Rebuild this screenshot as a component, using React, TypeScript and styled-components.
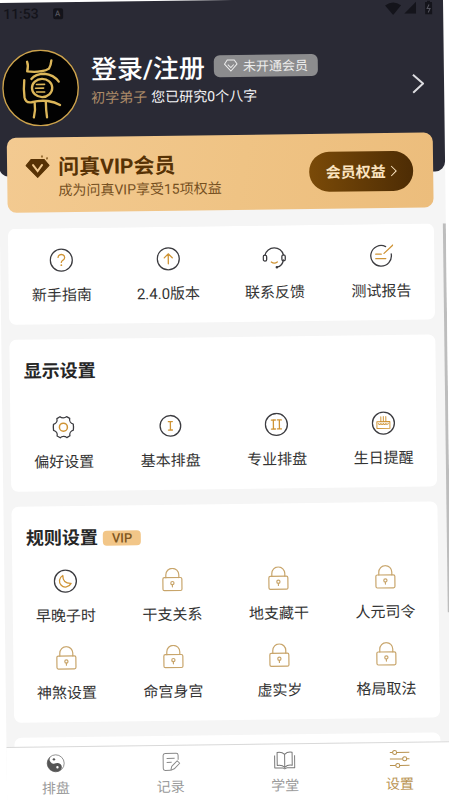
import React from "react";
import styled, { createGlobalStyle } from "styled-components";

const GlobalStyle = createGlobalStyle`
  * { box-sizing: border-box; }
  html, body { margin: 0; background: #fff; overflow: hidden; }
  body, button { font-family: Roboto, "Noto Sans CJK SC", sans-serif; }
  button { border: 0; padding: 0; background: none; color: inherit; cursor: pointer; }
  a { text-decoration: none; color: inherit; }
  svg { display: block; flex: none; }
`;

const Shell = styled.div`
  display: flex;
  flex-direction: column;
  width: calc(100% - 3px);
  height: calc(100vh + 8px);
  background: #f5f5f5;
  transform-origin: 0 0;
  transform: translate(-3px, 3px) rotate(-0.73deg);
`;

const Header = styled.header`
  height: 174px;
  flex: none;
  background: #2a2a35;
  border-radius: 0 0 10px 10px;
`;

const StatusBar = styled.div`
  display: flex;
  align-items: center;
  height: 22px;
  padding: 0 8px 0 6px;
  color: #14141b;
  font-size: 14px;
  font-weight: 500;
`;

const StatusIcons = styled.div`
  display: flex;
  align-items: center;
  gap: 3px;
  margin-left: auto;
  margin-bottom: 2px;
`;

const InputBadge = styled.span`
  display: grid;
  place-items: center;
  width: 10px;
  height: 11px;
  margin-left: 14px;
  border-radius: 2px;
  background: #14141b;
  color: #55555f;
  font-size: 8px;
`;

const Profile = styled.div`
  display: flex;
  align-items: center;
  margin-top: 25px;
  padding: 0 20px 0 4px;
`;

const ProfileText = styled.div`
  display: flex;
  flex: 1;
  flex-direction: column;
  margin: -14px 0 0 12px;
`;

const NameRow = styled.div`
  display: flex;
  align-items: center;
  gap: 9px;
`;

const LoginLink = styled.a`
  color: #fff;
  font-size: 26px;
  font-weight: 500;
  line-height: 34px;
`;

const MemberTag = styled.span`
  display: flex;
  align-items: center;
  gap: 5px;
  height: 22px;
  margin-bottom: 4px;
  padding: 0 10px;
  border-radius: 6px;
  background: #8c8c8e;
  color: #ececec;
  font-size: 13px;
`;

const Study = styled.p`
  margin: 0;
  color: #f2f2f4;
  font-size: 14px;
  line-height: 22px;
`;

const Rank = styled.span`
  margin-right: 4px;
  color: #ac8a68;
`;

const Banner = styled.section`
  display: flex;
  align-items: center;
  flex: none;
  height: 75px;
  margin: -39px 12px 0 8px;
  padding: 0 20px 0 18px;
  border-radius: 9px;
  background: linear-gradient(100deg, #f3ca91, #efc384 55%, #ecbd7c);
  color: #573205;
`;

const BannerText = styled.div`
  display: flex;
  flex: 1;
  flex-direction: column;
  margin: 6px 0 0 8px;
`;

const BannerTitle = styled.h2`
  margin: 0;
  font-size: 21px;
  font-weight: 700;
  line-height: 25px;
`;

const BannerNote = styled.p`
  margin: 0;
  color: #76501f;
  font-size: 14px;
  line-height: 20px;
`;

const BenefitButton = styled.button`
  display: flex;
  align-items: center;
  justify-content: center;
  gap: 4px;
  width: 104px;
  height: 40px;
  border-radius: 20px;
  background: linear-gradient(90deg, #7a4a08, #4d2c04);
  color: #fbe4c0;
  font-size: 15px;
  font-weight: 700;
`;

const BannerIcon = styled.span`
  margin-bottom: 18px;
`;

const Main = styled.main`
  display: flex;
  flex: 1;
  min-height: 0;
  overflow: hidden;
  margin-top: 16px;
  padding-left: 8px;
`;

const Cards = styled.div`
  display: flex;
  flex: 1;
  flex-direction: column;
  gap: 15px;
`;

const ScrollThumb = styled.div`
  width: 3px;
  height: 75%;
  margin-left: 9px;
  background: #bdbdbd;
`;

const Card = styled.section`
  flex: none;
  padding: 20px 0 18px;
  border-radius: 7px;
  background: #fff;
`;

const CardHead = styled.div<{ $gap: number }>`
  display: flex;
  align-items: center;
  gap: 5px;
  margin-bottom: ${(p) => p.$gap}px;
  padding-left: 14px;
`;

const CardTitle = styled.h2`
  margin: 0;
  color: #262626;
  font-size: 18px;
  font-weight: 700;
  line-height: 24px;
`;

const VipTag = styled.span`
  padding: 0 9px;
  border-radius: 4px;
  background: #f2c688;
  color: #80571f;
  font-size: 13px;
  font-weight: 500;
  line-height: 15px;
`;

const Grid = styled.div`
  display: grid;
  grid-template-columns: repeat(4, 1fr);
  row-gap: 19px;
`;

const Item = styled.button`
  display: flex;
  flex-direction: column;
  align-items: center;
  gap: 12px;
  color: #333;
  font-size: 15px;
  line-height: 22px;
`;

const TabBar = styled.nav`
  display: flex;
  flex: none;
  justify-content: space-between;
  height: 64px;
  padding: 6px 4px 0 0;
  border-top: 1px solid #d9d9d9;
  background: #fff;
`;

const Tab = styled.a<{ $active?: boolean }>`
  display: flex;
  flex-direction: column;
  align-items: center;
  gap: 5px;
  width: 98px;
  color: ${(p) => (p.$active ? "#b8924f" : "#9a9a9a")};
  font-size: 14px;
  line-height: 20px;
`;

const INK = "#3c3c40";
const GOLD = "#cf9435";

type IconProps = { children: React.ReactNode };
const Icon = ({ children }: IconProps) => (
  <svg width="24" height="24" viewBox="0 0 24 24" fill="none" strokeWidth="1.3" strokeLinecap="round" strokeLinejoin="round" aria-hidden="true">
    {children}
  </svg>
);
const Ring = () => <circle cx="12" cy="12" r="11" stroke={INK} />;

const icons: Record<string, React.ReactNode> = {
  guide: (
    <Icon>
      <Ring />
      <path d="M8.8 9.2a3.3 3 0 1 1 5 2.7c-1.2.8-1.8 1.3-1.8 2.3" stroke={GOLD} />
      <circle cx="12" cy="17" r=".9" fill={GOLD} />
    </Icon>
  ),
  version: (
    <Icon>
      <Ring />
      <path d="M12 17V7.2M8 11l4-4 4 4" stroke={GOLD} />
    </Icon>
  ),
  contact: (
    <Icon>
      <path d="M2.8 9.5a9.4 9 0 0 1 18.4 0M21 14.5c-.5 4.4-3 6.6-6.5 7.2" stroke={INK} />
      <rect x="1" y="9.5" width="3.4" height="6" rx="1.7" stroke={INK} />
      <rect x="19.6" y="9.5" width="3.4" height="6" rx="1.7" stroke={INK} />
      <circle cx="14.5" cy="21.8" r="1.3" fill={INK} />
      <path d="M9 16.5q3 2.4 6 0" stroke={GOLD} />
    </Icon>
  ),
  report: (
    <Icon>
      <path d="M16.5 2.500A10.300 10.300 0 1 0 22 10" stroke={INK} />
      <path d="M6.500 10h5.500M6.500 14.500h10M14.800 9.300l9-8.300" stroke={GOLD} />
    </Icon>
  ),
  gear: (
    <Icon>
      <path d="M8.7 1.500c1.700 1.700 4.900 1.700 6.600 0l3.100 1.800c-.6 2.500.9 5 3.500 5.700.3 2 .3 4 0 6-2.600.7-4.100 3.200-3.500 5.700l-3.100 1.800c-1.700-1.700-4.900-1.700-6.600 0l-3.100-1.800c.6-2.500-.9-5-3.500-5.700-.3-2-.3-4 0-6 2.600-.7 4.100-3.200 3.500-5.700z" stroke={INK} />
      <circle cx="12" cy="12" r="4" stroke={GOLD} strokeWidth="1.5" />
    </Icon>
  ),
  basic: (
    <Icon>
      <circle cx="12" cy="12" r="10.3" stroke={INK} />
      <path d="M10 7.800h4M12 7.800v8.400M10 16.200h4" stroke={GOLD} />
    </Icon>
  ),
  pro: (
    <Icon>
      <Ring />
      <path d="M7 7.500h4M9 7.500v9M7 16.500h4M13 7.500h4M15 7.500v9M13 16.500h4" stroke={GOLD} />
    </Icon>
  ),
  cake: (
    <Icon>
      <Ring />
      <path d="M5.500 10.500h13v6.800h-13zM7 12.500q1.200 1.600 2.500 0 1.200 1.600 2.500 0 1.200 1.600 2.500 0 1.200 1.600 2.500 0M9.500 5.500v4.500M12 5.500v4.500M14.500 5.500v4.500" stroke={GOLD} strokeWidth="1" />
    </Icon>
  ),
  moon: (
    <Icon>
      <Ring />
      <path d="M9.500 6.300C9.300 11.500 12 14.500 17.700 14.300C15.500 18.300 10.500 19 7.800 16C5 13 5.600 8.600 9.500 6.300z" stroke={GOLD} />
    </Icon>
  ),
  lock: (
    <Icon>
      <g stroke="#c8a56b" strokeWidth="1.2">
        <path d="M5.500 9.800V7a6.500 6.500 0 0 1 13 0v2.800" />
        <rect x="2.5" y="9.8" width="19" height="13" rx="1.5" />
        <circle cx="12" cy="15.3" r="1.6" />
        <path d="M12 17v2" />
      </g>
    </Icon>
  ),
};

type Entry = { icon: string; label: string };
const shortcuts: Entry[] = [
  { icon: "guide", label: "新手指南" },
  { icon: "version", label: "2.4.0版本" },
  { icon: "contact", label: "联系反馈" },
  { icon: "report", label: "测试报告" },
];
const display: Entry[] = [
  { icon: "gear", label: "偏好设置" },
  { icon: "basic", label: "基本排盘" },
  { icon: "pro", label: "专业排盘" },
  { icon: "cake", label: "生日提醒" },
];
const rules: Entry[] = [
  { icon: "moon", label: "早晚子时" },
  { icon: "lock", label: "干支关系" },
  { icon: "lock", label: "地支藏干" },
  { icon: "lock", label: "人元司令" },
  { icon: "lock", label: "神煞设置" },
  { icon: "lock", label: "命宫身宫" },
  { icon: "lock", label: "虚实岁" },
  { icon: "lock", label: "格局取法" },
];

const ItemGrid = ({ items }: { items: Entry[] }) => (
  <Grid>
    {items.map((it) => (
      <Item key={it.label} type="button">
        {icons[it.icon]}
        <span>{it.label}</span>
      </Item>
    ))}
  </Grid>
);

const Avatar = () => (
  <svg width="77" height="77" viewBox="0 0 76 76" fill="none" aria-hidden="true">
    <circle cx="38" cy="38" r="37.2" fill="#020202" stroke="#cda34c" strokeWidth="1.4" />
    <g stroke="#dcb659" strokeWidth="2.3" strokeLinecap="round" strokeLinejoin="round">
      <path d="M25 12q1.500 4 0 9.500 8 1 14 0 5-.5 7.500-2.500 2-3 2.500-8" />
      <path d="M29 29q4-5 13-5 9 1 14 8" />
      <path d="M22 30q-1 9 0 17 1 6 7 5 8-2 16-1 7 1 12 4" />
      <ellipse cx="39.5" cy="38" rx="10" ry="9" />
      <path d="M34 34.500h8M33 38.200h8M34 42h8" strokeWidth="1.6" />
      <path d="M32 53q1 7-1 14M43 52q0 8 1 15" />
    </g>
  </svg>
);

const Chevron = ({ w, h, stroke }: { w: number; h: number; stroke: number }) => (
  <svg width={w} height={h} viewBox={`0 0 ${w} ${h}`} fill="none" stroke="currentColor" strokeWidth={stroke} aria-hidden="true">
    <path d={`M1 1L${w - 1} ${h / 2}L1 ${h - 1}`} />
  </svg>
);

const MoreButton = styled.button`
  color: #dcdce0;
`;

export default function App() {
  return (
    <>
      <GlobalStyle />
      <Shell>
        <Header>
          <StatusBar>
            <span>11:53</span>
            <InputBadge>A</InputBadge>
            <StatusIcons>
              <svg width="16" height="13" viewBox="0 0 16 13" fill="currentColor" aria-hidden="true">
                <path d="M0 3.500Q8-2.500 16 3.500L8 13z" />
              </svg>
              <svg width="12" height="12" viewBox="0 0 12 12" fill="currentColor" aria-hidden="true">
                <path d="M12 0v12H0z" />
              </svg>
              <svg width="16" height="14" viewBox="0 0 16 14" aria-hidden="true">
                <path d="M6 1.500h2V0h3v1.500h2V14H6z" fill="currentColor" />
                <path d="M10 4L8 8h3l-2 4" stroke="#55555f" fill="none" />
              </svg>
            </StatusIcons>
          </StatusBar>
          <Profile>
            <Avatar />
            <ProfileText>
              <NameRow>
                <LoginLink href="#login">登录/注册</LoginLink>
                <MemberTag>
                  <svg width="14" height="13" viewBox="0 0 14 13" fill="none" stroke="currentColor" aria-hidden="true">
                    <path d="M3.500 1h7L13.300 5 7 12 .7 5zM4 5.500l3 3 3-3" />
                  </svg>
                  未开通会员
                </MemberTag>
              </NameRow>
              <Study>
                <Rank>初学弟子</Rank>
                您已研究0个八字
              </Study>
            </ProfileText>
            <MoreButton type="button" aria-label="个人资料">
              <Chevron w={12} h={20} stroke={2} />
            </MoreButton>
          </Profile>
        </Header>

        <Banner>
          <BannerIcon>
            <svg width="25" height="24" viewBox="0 0 25 24" aria-hidden="true">
              <path d="M6 5h13l5 6-11.500 12L1 11z" fill="#573205" stroke="#573205" strokeLinejoin="round" />
              <path d="M8 10.500l4.500 6 4.500-6" fill="none" stroke="#f2c98f" strokeWidth="2" strokeLinecap="round" />
              <path d="M16 1h2v2h-2zM21 3h2v2h-2z" fill="#9a7036" />
            </svg>
          </BannerIcon>
          <BannerText>
            <BannerTitle>问真VIP会员</BannerTitle>
            <BannerNote>成为问真VIP享受15项权益</BannerNote>
          </BannerText>
          <BenefitButton type="button">
            会员权益
            <Chevron w={7} h={12} stroke={1} />
          </BenefitButton>
        </Banner>

        <Main>
          <Cards>
            <Card>
              <ItemGrid items={shortcuts} />
            </Card>
            <Card>
              <CardHead $gap={32}>
                <CardTitle>显示设置</CardTitle>
              </CardHead>
              <ItemGrid items={display} />
            </Card>
            <Card>
              <CardHead $gap={19}>
                <CardTitle>规则设置</CardTitle>
                <VipTag>VIP</VipTag>
              </CardHead>
              <ItemGrid items={rules} />
            </Card>
            <Card />
          </Cards>
          <ScrollThumb />
        </Main>

        <TabBar>
          <Tab href="#chart">
            <svg width="20" height="20" viewBox="0 0 20 20" aria-hidden="true">
              <circle cx="10" cy="10" r="8.5" fill="#fff" stroke="#777" strokeWidth=".8" />
              <path d="M10 1.500a8.500 8.500 0 0 0 0 17 4.250 4.250 0 0 0 0-8.500 4.250 4.250 0 0 1 0-8.500z" fill="#555" transform="rotate(-25 10 10)" />
              <circle cx="8.3" cy="6" r="1.2" fill="#555" />
              <circle cx="11.7" cy="14" r="1.2" fill="#fff" />
            </svg>
            排盘
          </Tab>
          <Tab href="#records">
            <svg width="20" height="20" viewBox="0 0 20 20" fill="none" stroke="#888" strokeLinejoin="round" aria-hidden="true">
              <path d="M17.500 8V3.500q0-2-2-2h-11q-2 0-2 2v13q0 2 2 2h5M6 6.500h8M6 10.500h5M10 18.500l1-4 5.500-5.500 2.500 2.500-5.500 5.500z" />
            </svg>
            记录
          </Tab>
          <Tab href="#school">
            <svg width="22" height="20" viewBox="0 0 22 20" fill="none" stroke="#777" strokeLinejoin="round" aria-hidden="true">
              <path d="M11 4Q8 1 3.500 2v13Q8 14 11 17q3-3 7.500-2V2Q14 1 11 4zM11 4v13M1 5v12.500h8l2 1 2-1h8V5" />
            </svg>
            学堂
          </Tab>
          <Tab href="#settings" $active>
            <svg width="20" height="20" viewBox="0 0 20 20" fill="none" stroke="currentColor" aria-hidden="true">
              <path d="M0 3.500h3M7 3.500h13M0 10h13M17 10h3M0 16.500h6M10 16.500h10" />
              <circle cx="5" cy="3.5" r="2" />
              <circle cx="15" cy="10" r="2" />
              <circle cx="8" cy="16.5" r="2" />
            </svg>
            设置
          </Tab>
        </TabBar>
      </Shell>
    </>
  );
}
